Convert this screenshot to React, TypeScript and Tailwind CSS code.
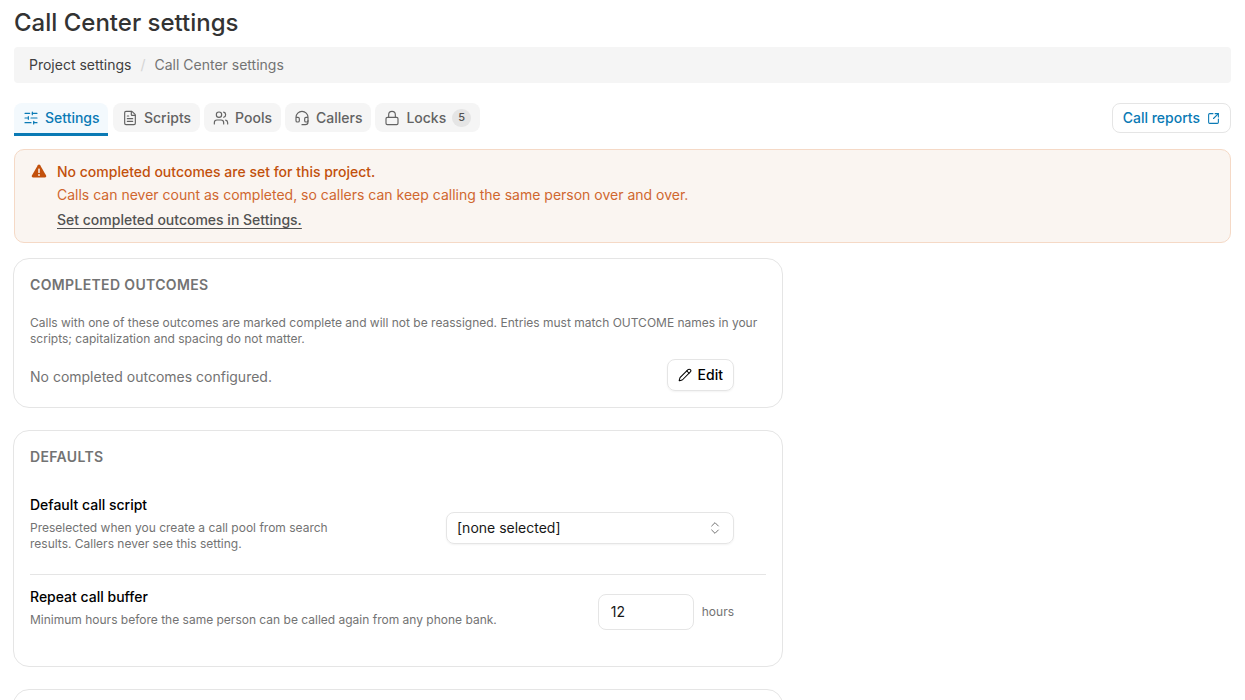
import React from "react";
import {
  SlidersHorizontal,
  FileText,
  Users,
  Headset,
  Lock,
  SquareArrowOutUpRight,
  Pencil,
  ChevronsUpDown,
} from "lucide-react";

const tabs = [
  { label: "Scripts", icon: FileText },
  { label: "Pools", icon: Users },
  { label: "Callers", icon: Headset },
];

const tabClass =
  "flex items-center gap-[6px] h-[29px] px-[9px] rounded-lg bg-[#f5f5f5] text-[#636363] text-sm font-medium";

const App: React.FC = () => {
  return (
    <div className="h-[700px] overflow-hidden bg-white px-[14px] font-['Inter',sans-serif] text-[#27272a]">
      <h1 className="pt-[8px] h-[47px] text-[24px] leading-[30px] font-medium text-[#333333]">
        Call Center settings
      </h1>

      <nav className="flex items-center h-[36px] px-[15px] rounded bg-[#f5f5f5] text-sm">
        <span className="text-[#404040]">Project settings</span>
        <span className="mx-[9px] text-[#d4d4d4]">/</span>
        <span className="text-[#737373]">Call Center settings</span>
      </nav>

      <div className="flex items-start justify-between mt-[20px] h-[46px]">
        <div className="flex gap-[4px]">
          <div className="flex items-center gap-[6px] h-[33px] w-[94px] mr-[1px] pl-[9px] rounded-t-lg bg-[#f3f9fd] border-b-[3px] border-[#0a7ab5] text-[#0a7ab5] text-sm font-medium">
            <SlidersHorizontal size={16} strokeWidth={1.75} />
            Settings
          </div>
          {tabs.map((t) => (
            <div key={t.label} className={tabClass}>
              <t.icon size={16} strokeWidth={1.75} />
              {t.label}
            </div>
          ))}
          <div className={tabClass}>
            <Lock size={16} strokeWidth={1.75} />
            Locks
            <span className="flex items-center justify-center w-[19px] h-[18px] rounded-full bg-[#e5e5e5] text-[11px] text-[#525252]">
              5
            </span>
          </div>
        </div>
        <button className="flex items-center gap-[7px] h-[30px] px-[10px] rounded-lg border border-[#e5e5e5] text-[#0a7ab5] text-sm font-medium">
          Call reports
          <SquareArrowOutUpRight size={13} strokeWidth={2} />
        </button>
      </div>

      <div className="flex h-[94px] pt-[10px] pl-[16px] rounded-[10px] border border-[#f5d9c6] bg-[#faf5f1] text-sm leading-[24px]">
        <svg viewBox="0 0 16 16" className="w-[16px] h-[16px] mt-[3px] shrink-0 text-[#c2500c]">
          <path
            fill="currentColor"
            d="M8 1.5c-.5 0-.9.3-1.2.7L.9 12.5c-.5.9.1 2 1.2 2h11.8c1.1 0 1.7-1.1 1.2-2L9.200 2.200C8.900 1.800 8.500 1.500 8 1.500z"
          />
          <rect x="7.250" y="5.500" width="1.500" height="4.500" rx=".5" fill="#faf5f1" />
          <circle cx="8" cy="12" r=".9" fill="#faf5f1" />
        </svg>
        <div className="ml-[10px]">
          <div className="font-medium text-[#c2500c]">No completed outcomes are set for this project.</div>
          <div className="leading-[22px] text-[#d0672f]">
            Calls can never count as completed, so callers can keep calling the same person over and over.
          </div>
          <a className="block mt-[2px] font-medium text-[#525252] underline underline-offset-[3px]">
            Set completed outcomes in Settings.
          </a>
        </div>
      </div>

      <section className="mt-[15px] -ml-px w-[770px] h-[150px] rounded-2xl border border-[#e5e5e5] px-[16px] pt-[16px]">
        <h2 className="text-sm leading-[20px] font-semibold uppercase tracking-[0.025em] text-[#737373]">
          Completed outcomes
        </h2>
        <p className="mt-[20px] text-xs leading-[16px] text-[#737373]">
          Calls with one of these outcomes are marked complete and will not be reassigned. Entries must match OUTCOME
          names in your scripts; capitalization and spacing do not matter.
        </p>
        <div className="flex items-start justify-between mt-[12px] pr-[32px]">
          <span className="mt-[8px] text-sm text-[#737373]">No completed outcomes configured.</span>
          <button className="flex items-center gap-[6px] h-[32px] px-[10px] rounded-lg border border-[#e5e5e5] shadow-xs text-sm font-medium text-black">
            <Pencil size={14} strokeWidth={1.75} />
            Edit
          </button>
        </div>
      </section>

      <section className="mt-[22px] -ml-px w-[770px] h-[237px] rounded-2xl border border-[#e5e5e5] px-[16px] pt-[16px]">
        <h2 className="text-sm leading-[20px] font-semibold uppercase tracking-[0.025em] text-[#737373]">Defaults</h2>
        <div className="flex items-start justify-between mt-[28px] pb-[22px] border-b border-[#e5e5e5] pr-[32px]">
          <div>
            <div className="text-sm leading-[20px] font-medium text-black">Default call script</div>
            <p className="mt-[5px] w-[310px] text-xs leading-[16px] text-[#737373]">
              Preselected when you create a call pool from search results. Callers never see this setting.
            </p>
          </div>
          <div className="flex items-center justify-between w-[288px] h-[32px] mt-[17px] px-[10px] rounded-lg border border-[#e5e5e5] shadow-xs text-sm text-[#171717]">
            [none selected]
            <ChevronsUpDown size={16} strokeWidth={1.5} className="text-[#737373]" />
          </div>
        </div>
        <div className="flex items-start justify-between mt-[12px] pr-[32px]">
          <div>
            <div className="text-sm leading-[20px] font-medium text-black">Repeat call buffer</div>
            <p className="mt-[5px] text-xs leading-[16px] text-[#737373]">
              Minimum hours before the same person can be called again from any phone bank.
            </p>
          </div>
          <div className="flex items-center gap-[8px] mt-[7px]">
            <div className="flex items-center w-[96px] h-[36px] px-[12px] rounded-lg border border-[#e5e5e5] text-sm text-[#171717]">
              12
            </div>
            <span className="text-xs text-[#737373]">hours</span>
          </div>
        </div>
      </section>

      <section className="mt-[22px] -ml-px w-[770px] h-[100px] rounded-2xl border border-[#e5e5e5]" />
    </div>
  );
};

export default App;
